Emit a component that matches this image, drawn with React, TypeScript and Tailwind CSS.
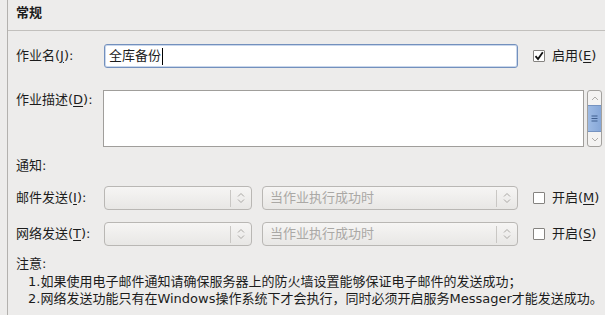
import React from "react";

const FONT = '"DejaVu Sans", "Noto Sans CJK SC", sans-serif';

function U({ c }: { c: string }) {
  return <span className="underline underline-offset-[2px]">{c}</span>;
}

function Check({ checked }: { checked?: boolean }) {
  return (
    <div className="w-[12px] h-[12px] border border-[#858380] bg-white rounded-[1px] flex items-center justify-center shrink-0">
      {checked && (
        <svg width="10" height="10" viewBox="0 0 10 10">
          <path d="M1.5 5.2 L4 8 L8.8 1.2" stroke="#111" strokeWidth="1.8" fill="none" />
        </svg>
      )}
    </div>
  );
}

function Arrows() {
  return (
    <svg width="8" height="12" viewBox="0 0 8 12">
      <path d="M1 4.5 L4 1.5 L7 4.5" stroke="#a9a7a4" strokeWidth="1" fill="none" />
      <path d="M1 7.5 L4 10.5 L7 7.5" stroke="#a9a7a4" strokeWidth="1" fill="none" />
    </svg>
  );
}

function Combo({ w, text }: { w: string; text?: string }) {
  return (
    <div
      className={`${w} h-[24px] rounded-[4px] border border-[#b9b7b4] bg-gradient-to-b from-[#f6f5f4] to-[#e8e7e5] flex items-center shrink-0`}
    >
      <div className="flex-1 pl-[7px] text-[#aaa8a5] whitespace-nowrap overflow-hidden">{text}</div>
      <div className="w-px h-[17px] bg-[#c9c7c4]" />
      <div className="w-[20px] flex items-center justify-center">
        <Arrows />
      </div>
    </div>
  );
}

export default function App() {
  return (
    <div
      className="w-[605px] h-[315px] bg-[#edeceb] text-[13px] text-[#1c1c1c] pl-[7px] overflow-hidden"
      style={{ fontFamily: FONT }}
    >
      <div className="h-full border-l border-[#b3b1ae] flex flex-col">
        <div className="h-[31px] border-b border-[#c2c0bd] pl-[8px] pt-[4px] font-bold leading-[18px]">
          常规
        </div>
        <div className="pl-[8px] flex flex-col leading-[18px]">
          {/* row 1 */}
          <div className="mt-[13px] h-[24px] flex items-center">
            <div className="w-[88px]">作业名(<U c="J" />):</div>
            <div className="w-[414px] h-[24px] rounded-[3px] border border-[#7390bd] bg-white flex items-center pl-[4px] shadow-[inset_0_0_0_1px_#c9d7ec]">
              <span>全库备份</span>
              <span className="w-px h-[17px] bg-black ml-[1px]" />
            </div>
            <div className="ml-[15px] flex items-center gap-[7px]">
              <Check checked />
              <span>启用(<U c="E" />)</span>
            </div>
          </div>
          {/* row 2 */}
          <div className="mt-[22px] h-[57px] flex items-start">
            <div className="w-[87px] pt-[1px]">作业描述(<U c="D" />):</div>
            <div className="w-[481px] h-[57px] border border-[#a09e9b] bg-white" />
            <div className="ml-[3px] w-[15px] h-[57px] rounded-[3px] border border-[#a3a19e] bg-[#f4f3f2] flex flex-col">
              <div className="h-[14px] flex items-center justify-center">
                <svg width="8" height="5" viewBox="0 0 8 5">
                  <path d="M1 4 L4 1 L7 4" stroke="#aeaca9" strokeWidth="1" fill="none" />
                </svg>
              </div>
              <div className="h-[27px] bg-gradient-to-r from-[#9ebbe4] to-[#86a7d8] border-y border-[#7693c0] flex items-center justify-center">
                <svg width="7" height="7" viewBox="0 0 7 7">
                  <path d="M0.5 1 H6.5 M0.5 3.5 H6.5 M0.5 6 H6.5" stroke="#3f5f8f" strokeWidth="1" />
                </svg>
              </div>
              <div className="flex-1 flex items-center justify-center">
                <svg width="8" height="5" viewBox="0 0 8 5">
                  <path d="M1 1 L4 4 L7 1" stroke="#aeaca9" strokeWidth="1" fill="none" />
                </svg>
              </div>
            </div>
          </div>
          {/* notify */}
          <div className="mt-[10px] h-[18px]">通知:</div>
          {/* row 3 */}
          <div className="mt-[11px] h-[24px] flex items-center">
            <div className="w-[88px]">邮件发送(<U c="I" />):</div>
            <Combo w="w-[148px]" />
            <div className="w-[10px]" />
            <Combo w="w-[256px]" text="当作业执行成功时" />
            <div className="ml-[15px] flex items-center gap-[7px]">
              <Check />
              <span>开启(<U c="M" />)</span>
            </div>
          </div>
          {/* row 4 */}
          <div className="mt-[12px] h-[24px] flex items-center">
            <div className="w-[88px]">网络发送(<U c="T" />):</div>
            <Combo w="w-[148px]" />
            <div className="w-[10px]" />
            <Combo w="w-[256px]" text="当作业执行成功时" />
            <div className="ml-[15px] flex items-center gap-[7px]">
              <Check />
              <span>开启(<U c="S" />)</span>
            </div>
          </div>
          {/* notes */}
          <div className="mt-[9px] h-[18px]">注意:</div>
          <div className="pl-[12px] whitespace-nowrap h-[17px]">
            1.如果使用电子邮件通知请确保服务器上的防火墙设置能够保证电子邮件的发送成功；
          </div>
          <div className="pl-[12px] whitespace-nowrap h-[17px]">
            2.网络发送功能只有在Windows操作系统下才会执行，同时必须开启服务Messager才能发送成功。
          </div>
        </div>
      </div>
    </div>
  );
}
